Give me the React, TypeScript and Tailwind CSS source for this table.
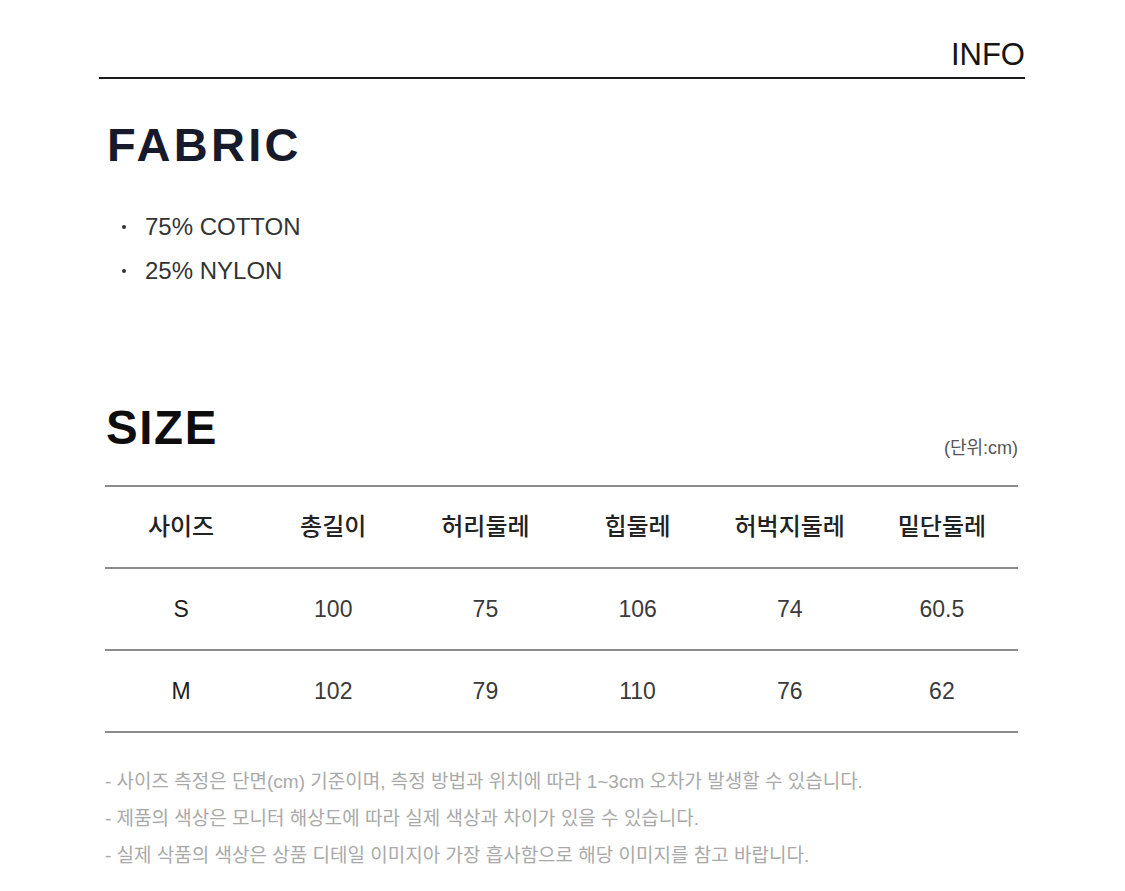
import React from "react";

const latin = { fontFamily: '"Liberation Sans", "Noto Sans CJK KR", Arial, sans-serif' };
const kr = { fontFamily: '"Liberation Sans", "Noto Sans CJK KR", sans-serif' };

const headers = ["사이즈", "총길이", "허리둘레", "힙둘레", "허벅지둘레", "밑단둘레"];
const rows = [
  ["S", "100", "75", "106", "74", "60.5"],
  ["M", "102", "79", "110", "76", "62"],
];
const notes = [
  "- 사이즈 측정은 단면(cm) 기준이며, 측정 방법과 위치에 따라 1~3cm 오차가 발생할 수 있습니다.",
  "- 제품의 색상은 모니터 해상도에 따라 실제 색상과 차이가 있을 수 있습니다.",
  "- 실제 삭품의 색상은 상품 디테일 이미지아 가장 흡사함으로 해당 이미지를 참고 바랍니다.",
];

export default function App() {
  return (
    <div className="w-[1125px] h-[891px] bg-white overflow-hidden" style={latin}>
      <div className="pt-[39px] ml-[99px] w-[926px]">
        <div className="flex justify-end">
          <span className="text-[31px] leading-none text-[#151515]">INFO</span>
        </div>
        <div className="mt-[7px] h-[2px] bg-[#1a1a1a]" />
      </div>
      <div className="ml-[105px] w-[913px]">
        <div className="mt-[42px] ml-[2px] text-[47px] leading-none font-bold tracking-[3.3px] text-[#171a2b]">
          FABRIC
        </div>
        <ul className="mt-[37px]">
          {["75% COTTON", "25% NYLON"].map((t) => (
            <li key={t} className="flex items-center h-[44px] text-[24px] text-[#333]">
              <span className="ml-[17px] w-[4px] h-[4px] rounded-full bg-[#333]" />
              <span className="ml-[19px]">{t}</span>
            </li>
          ))}
        </ul>
        <div className="mt-[111px] flex justify-between items-start">
          <div className="ml-[1px] text-[47.5px] leading-none font-bold tracking-[1.6px] text-[#0d0d0d]">SIZE</div>
          <div className="mt-[34px] text-[18px] leading-[20px] text-[#555]" style={kr}>
            (단위:cm)
          </div>
        </div>
        <div className="mt-[27px] border-t-2 border-[#8c8c8c]">
          <div className="grid grid-cols-6 h-[82px] border-b-2 border-[#8c8c8c] items-center text-center">
            {headers.map((h) => (
              <div key={h} className="text-[24px] font-medium text-[#222]" style={kr}>
                {h}
              </div>
            ))}
          </div>
          {rows.map((r) => (
            <div key={r[0]} className="grid grid-cols-6 h-[82px] border-b-2 border-[#8c8c8c] items-center text-center">
              {r.map((c, i) => (
                <div
                  key={i}
                  className={
                    i === 0
                      ? "text-[23px] font-medium text-[#1e1e1e]"
                      : "text-[23px] text-[#3a3a3a]"
                  }
                >
                  {c}
                </div>
              ))}
            </div>
          ))}
        </div>
        <div className="mt-[30px]" style={kr}>
          {notes.map((n) => (
            <div key={n} className="h-[37px] leading-[37px] text-[19px] text-[#a9a9a9] whitespace-nowrap">
              {n}
            </div>
          ))}
        </div>
      </div>
    </div>
  );
}
